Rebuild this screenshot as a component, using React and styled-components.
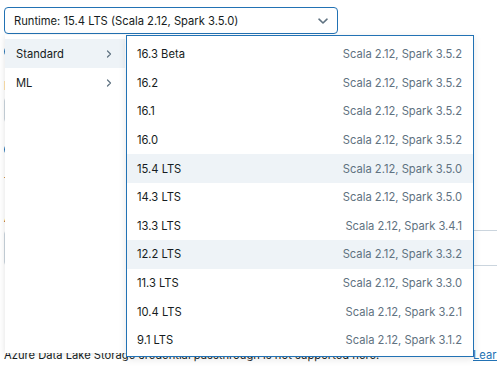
import styled, { createGlobalStyle } from "styled-components";

const GlobalStyle = createGlobalStyle`
  body {
    margin: 0;
    background: #fff;
    font-family: "Inter", "Liberation Sans", sans-serif;
    color: #161c21;
  }
`;

const Page = styled.div`
  position: relative;
  width: 497px;
  height: 366px;
  overflow: hidden;
  padding: 7px 0 0 4px;
  box-sizing: border-box;
`;

const Select = styled.div`
  width: 334px;
  height: 27px;
  box-sizing: border-box;
  border: 1px solid #2272b4;
  border-radius: 4px;
  display: flex;
  align-items: center;
  justify-content: space-between;
  padding: 0 8px 0 9px;
  font-size: 11.2px;
`;

const Form = styled.div`
  display: flex;
  flex-direction: column;
`;

const Toggle = styled.div`
  width: 28px;
  height: 13px;
  border-radius: 7px;
  background: #2272b4;
  margin-top: ${(p) => p.$top}px;
`;

const Label = styled.div`
  font-size: 11.2px;
  margin-top: ${(p) => p.$top}px;
  white-space: nowrap;
`;

const Input = styled.div`
  width: ${(p) => p.$w}px;
  height: ${(p) => p.$h}px;
  border: 1px solid #cbd5de;
  border-radius: 4px;
  margin-top: ${(p) => p.$top}px;
`;

const Footer = styled.div`
  position: absolute;
  left: 4px;
  top: 348px;
  display: flex;
  font-size: 11.2px;
  white-space: nowrap;
`;

const FooterText = styled.span`
  flex: 0 0 469px;
`;

const Link = styled.a`
  color: #2272b4;
  text-decoration: underline;
`;

const Menu = styled.div`
  position: absolute;
  top: 35px;
  left: 5px;
  width: 122px;
  height: 318px;
  box-sizing: border-box;
  background: #fff;
  padding-top: 4px;
  box-shadow: 0 1px 6px rgba(0, 0, 0, 0.12);
`;

const MenuItem = styled.div`
  height: 29px;
  display: flex;
  align-items: center;
  justify-content: space-between;
  padding: 0 12px 0 11px;
  margin-right: 2px;
  font-size: 11.2px;
  background: ${(p) => (p.$active ? "#eef3f7" : "transparent")};
`;

const Submenu = styled.div`
  position: absolute;
  top: 35px;
  left: 126px;
  width: 348px;
  height: 322px;
  box-sizing: border-box;
  background: #fff;
  border: 1px solid #2272b4;
  padding-top: 4px;
  box-shadow: 0 2px 8px rgba(0, 0, 0, 0.1);
`;

const Row = styled.div`
  height: 28.6px;
  display: flex;
  align-items: center;
  justify-content: space-between;
  padding: 0 11px 0 10px;
  font-size: 11.2px;
  background: ${(p) => (p.$active ? "#eef3f7" : "transparent")};
`;

const Meta = styled.span`
  color: #5f7281;
`;

const Chevron = ({ dir = "down" }) =>
  dir === "down" ? (
    <svg width="12" height="12" viewBox="0 0 12 12">
      <path d="M2 4.2 L6 8 L10 4.2" fill="none" stroke="#5f7281" strokeWidth="1.6" strokeLinecap="round" strokeLinejoin="round" />
    </svg>
  ) : (
    <svg width="8" height="10" viewBox="0 0 8 10">
      <path d="M2.5 2 L5.5 5 L2.5 8" fill="none" stroke="#5f7281" strokeWidth="1.2" strokeLinecap="round" strokeLinejoin="round" />
    </svg>
  );

const runtimes = [
  ["16.3 Beta", "Scala 2.12, Spark 3.5.2"],
  ["16.2", "Scala 2.12, Spark 3.5.2"],
  ["16.1", "Scala 2.12, Spark 3.5.2"],
  ["16.0", "Scala 2.12, Spark 3.5.2"],
  ["15.4 LTS", "Scala 2.12, Spark 3.5.0", true],
  ["14.3 LTS", "Scala 2.12, Spark 3.5.0"],
  ["13.3 LTS", "Scala 2.12, Spark 3.4.1"],
  ["12.2 LTS", "Scala 2.12, Spark 3.3.2", true],
  ["11.3 LTS", "Scala 2.12, Spark 3.3.0"],
  ["10.4 LTS", "Scala 2.12, Spark 3.2.1"],
  ["9.1 LTS", "Scala 2.12, Spark 3.1.2"],
];

export default function App() {
  return (
    <Page>
      <GlobalStyle />
      <Select>
        <span>Runtime: 15.4 LTS (Scala 2.12, Spark 3.5.0)</span>
        <Chevron />
      </Select>
      <Form>
        <Toggle $top={11} />
        <Label $top={21}>I</Label>
        <Input $w={300} $h={24} $top={4} />
        <Toggle $top={20} />
        <Label $top={19}>T</Label>
        <Label $top={22}>A</Label>
        <Input $w={520} $h={34} $top={5} />
      </Form>
      <Footer>
        <FooterText>Azure Data Lake Storage credential passthrough is not supported here.</FooterText>
        <Link>Learn more</Link>
      </Footer>
      <Menu>
        <MenuItem $active>
          <span>Standard</span>
          <Chevron dir="right" />
        </MenuItem>
        <MenuItem>
          <span>ML</span>
          <Chevron dir="right" />
        </MenuItem>
      </Menu>
      <Submenu>
        {runtimes.map(([name, meta, active]) => (
          <Row key={name} $active={active}>
            <span>{name}</span>
            <Meta>{meta}</Meta>
          </Row>
        ))}
      </Submenu>
    </Page>
  );
}
